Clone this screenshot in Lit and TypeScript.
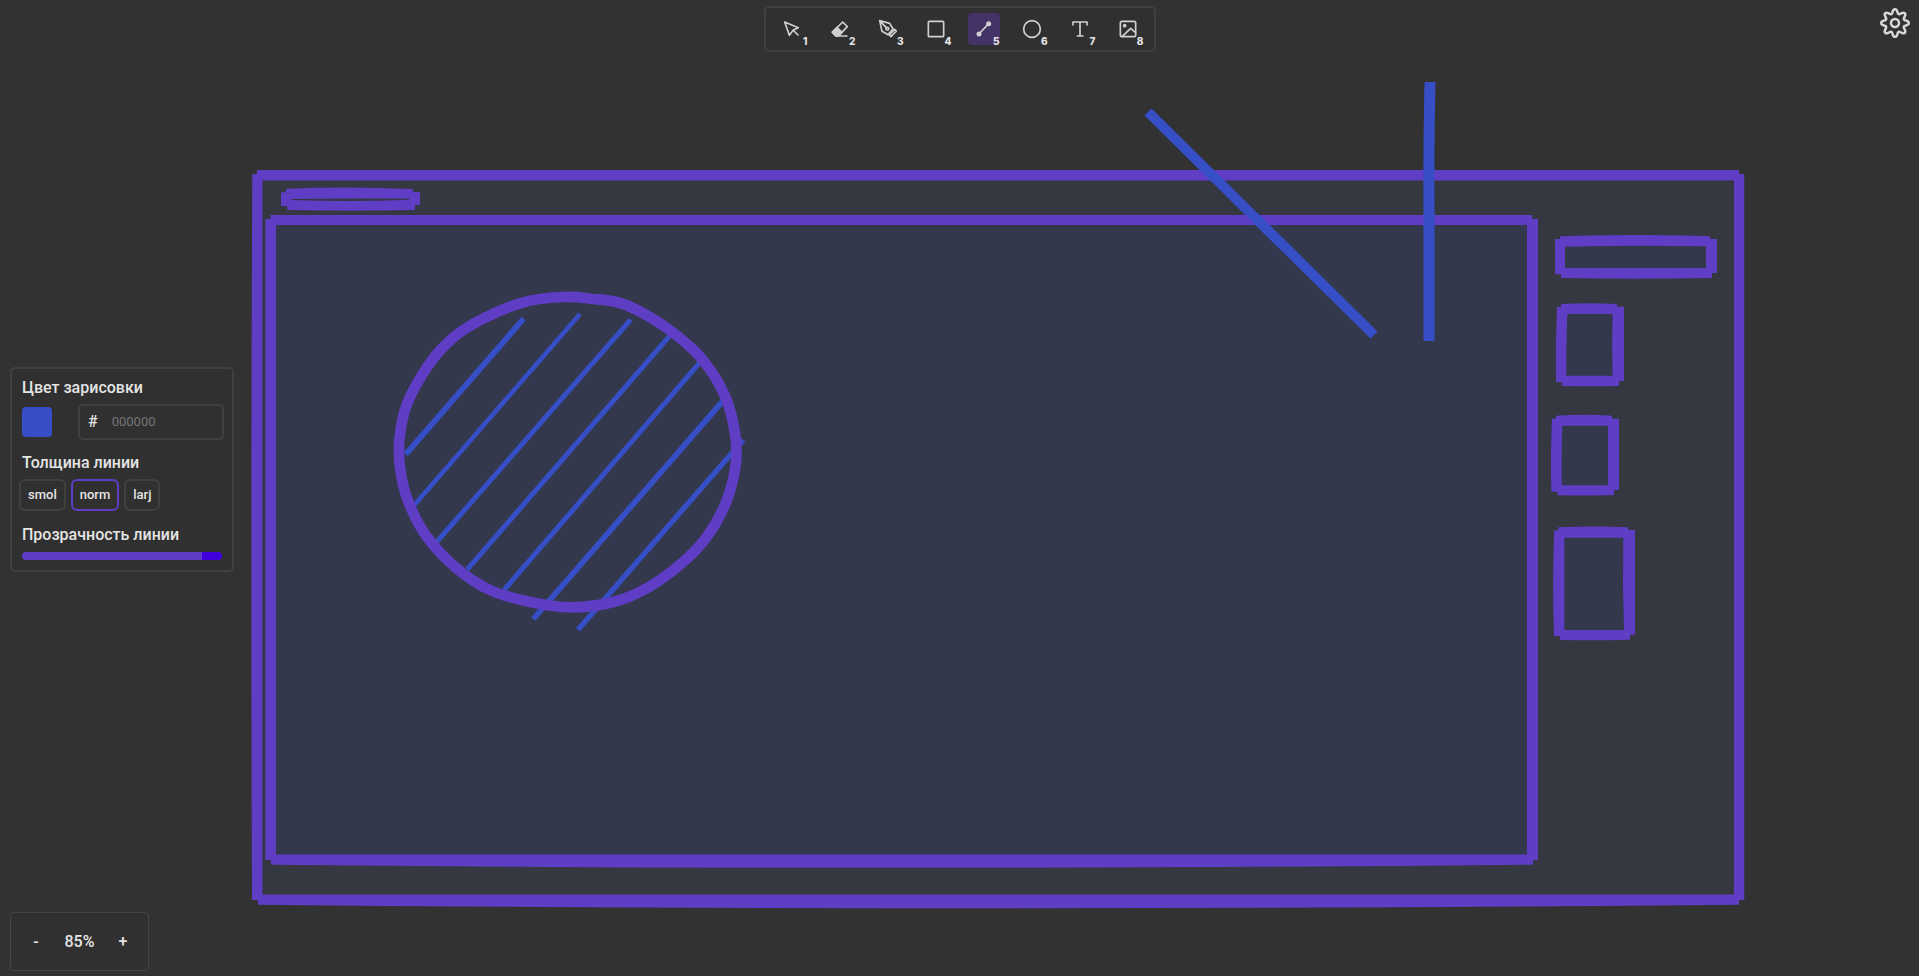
import { LitElement, html, svg, css } from "lit";
import { customElement, state } from "lit/decorators.js";

const tools = [
  { name: "Выделение", icon: svg`<path d="M26 27 67 44 52 51 40 67Z M54 54 66 66"/>` },
  { name: "Ластик", icon: svg`<path d="M56 27 70 41 44 68H35L25 58Z"/><path class="solid" d="M39 43 54 58 44 68H35L25 57Z"/><path d="M36 69H69"/>` },
  { name: "Перо", icon: svg`<path d="M23 23 30 55 48 65 63 48 53 31Z M23 23 42 43"/><circle cx="46" cy="47" r="4"/><path d="M52 66 57 71 73 54 68 49Z"/>` },
  { name: "Прямоугольник", icon: svg`<rect x="25" y="25" width="46" height="46" rx="3"/>` },
  { name: "Линия", icon: svg`<path d="M33 63 62 32"/><circle class="solid" cx="33" cy="63" r="5"/><circle class="solid" cx="62" cy="32" r="5"/>` },
  { name: "Эллипс", icon: svg`<circle cx="48" cy="48" r="25"/>` },
  { name: "Текст", icon: svg`<path d="M27 36V27H69V36 M48 27V69 M40 69H57"/>` },
  { name: "Изображение", icon: svg`<rect x="25" y="25" width="46" height="46" rx="5"/><circle class="solid" cx="38" cy="38" r="3"/><path d="M31 70 56 46 70 58"/>` },
];

const hatching = [
  [77, 553, 431, 146, 17],
  [105, 703, 600, 132, 14],
  [170, 816, 752, 149, 15],
  [262, 898, 880, 185, 15],
  [372, 960, 970, 265, 15],
  [460, 1047, 1040, 380, 17],
  [594, 1079, 1090, 510, 16],
];

const ring: [number, number][] = [
  [550, 81], [640, 87], [710, 96], [770, 119], [870, 181], [965, 266], [1035, 378], [1065, 490],
  [1067, 585], [1037, 700], [980, 801], [905, 880], [805, 952], [700, 996], [575, 1012], [450, 996],
  [330, 960], [230, 895], [140, 800], [85, 695], [61, 600], [58, 510], [80, 405], [145, 286],
  [215, 207], [300, 151], [430, 97],
];

/** Closed smooth curve through all the points (Catmull-Rom). */
function smooth(p: [number, number][]) {
  const n = p.length;
  let d = `M${p[0][0]} ${p[0][1]}`;
  for (let i = 0; i < n; i++) {
    const [a, b, c, e] = [p[(i + n - 1) % n], p[i], p[(i + 1) % n], p[(i + 2) % n]];
    d += `C${b[0] + (c[0] - a[0]) / 6} ${b[1] + (c[1] - a[1]) / 6} ${c[0] - (e[0] - b[0]) / 6} ${c[1] - (e[1] - b[1]) / 6} ${c[0]} ${c[1]}`;
  }
  return d + "Z";
}

/** Outline of the cog with rounded teeth. */
function cog() {
  const pts: [number, number][] = [];
  for (let i = 0; i < 64; i++) {
    const t = (i / 64) * Math.PI * 2;
    const w = Math.cos(8 * t);
    const r = 11.7 + 2.1 * Math.sign(w) * Math.pow(Math.abs(w), 0.7);
    pts.push([16 + r * Math.cos(t), 16 + r * Math.sin(t)]);
  }
  return smooth(pts);
}

@customElement("app-root")
export class AppRoot extends LitElement {
  @state() tool = 4;
  @state() width = "norm";
  @state() zoom = 85;

  static styles = css`
    :host {
      display: flex;
      flex-direction: column;
      position: relative;
      box-sizing: border-box;
      min-height: 100vh;
      padding: 6px 8px 5px;
      overflow: hidden;
      background: #323232;
      color: #e4e4e4;
      font: 500 16px/20px Roboto, sans-serif;
    }
    * { box-sizing: border-box; }
    button, input { font: inherit; color: inherit; margin: 0; }
    button { background: none; border: 0; padding: 0; cursor: pointer; }
    .canvas {
      position: absolute;
      inset: 0;
      width: 100%;
      height: 100%;
    }
    .violet { fill: #5f3dc4; }
    .ring { fill: none; stroke: #5f3dc4; stroke-width: 32; }
    .blue { fill: none; stroke: #364fc7; }
    .outer-fill { fill: #353741; }
    .inner-fill { fill: #33384d; }
    .top, .middle, .zoom { position: relative; }
    .top {
      display: grid;
      grid-template-columns: 1fr auto 1fr;
      align-items: start;
    }
    .tools {
      grid-column: 2;
      display: flex;
      gap: 16px;
      padding: 5px 10px;
      border: 2px solid #404040;
      border-radius: 5px;
      background: #303030;
    }
    .tool {
      position: relative;
      width: 32px;
      height: 32px;
      border-radius: 4px;
    }
    .tool.active { background: #443366; }
    .tool svg {
      display: block;
      width: 32px;
      height: 32px;
      fill: none;
      stroke: #d0d0d0;
      stroke-width: 5;
      stroke-linejoin: round;
      stroke-linecap: round;
    }
    .tool .solid { fill: #d0d0d0; }
    .key {
      position: absolute;
      right: 0;
      bottom: 0;
      font: 800 10px/8px Inter, sans-serif;
    }
    .settings { justify-self: end; width: 32px; height: 34px; }
    .settings svg {
      display: block;
      fill: none;
      stroke: #d8d8d8;
      stroke-width: 2.5;
    }
    .middle {
      flex: 1;
      display: flex;
      align-items: center;
      padding: 0 0 25px 2px;
    }
    .panel {
      width: 224px;
      padding: 9px 10px 10px;
      border: 2px solid #404040;
      border-radius: 5px;
      background: #303030;
    }
    .label { display: block; }
    .row { display: flex; align-items: center; }
    .colors { justify-content: space-between; margin: 6px -2px 13px 0; }
    .swatch {
      width: 30px;
      height: 30px;
      border-radius: 4px;
      background: #364fc7;
    }
    .hex {
      display: flex;
      align-items: center;
      gap: 14px;
      width: 146px;
      height: 36px;
      padding: 0 8px;
      border: 2px solid #404040;
      border-radius: 5px;
    }
    .hex input {
      width: 100px;
      padding: 0;
      border: 0;
      outline: 0;
      background: none;
      font-size: 13px;
      font-weight: 400;
    }
    .hex input::placeholder { color: #757575; opacity: 1; }
    .widths { gap: 5px; margin: 6px -3px 14px; }
    .widths button {
      height: 32px;
      padding: 0 7px;
      border: 2px solid #404040;
      border-radius: 6px;
      font-size: 13px;
    }
    .widths .active { border-color: #5f3dc4; }
    .slider {
      appearance: none;
      display: block;
      width: 100%;
      height: 8px;
      margin: 7px 0 0;
      border-radius: 4px;
      overflow: hidden;
      background: #5f3dc4;
    }
    .slider::-webkit-slider-thumb {
      appearance: none;
      width: 20px;
      height: 8px;
      background: #4000dc;
    }
    .zoom {
      align-self: flex-start;
      display: flex;
      align-items: center;
      gap: 11px;
      height: 59px;
      margin-left: 2px;
      padding: 0 9px;
      border: 1px solid #454545;
      border-radius: 4px;
      background: #303030;
    }
    .zoom button { width: 32px; height: 32px; }
    .zoom output { width: 33px; text-align: center; }
  `;

  drawing() {
    return html`<svg class="canvas" role="img" aria-label="Рисунок">
      <rect class="outer-fill" x="257" y="175" width="1482" height="725" />
      <rect class="inner-fill" x="271" y="220" width="1262" height="640" />
      <g class="violet" fill-rule="evenodd">
        <path d="M257 170H1739V174H1744.3V900H1739V904.7Q1000 912 258 904.7V900H252Q250.5 530 252.3 174H257ZM262.5 180.5V894.5H1734V180.5Z" />
        <path d="M270.5 215H1532V219H1538V860H1533V864.7Q900 871 271 864.7V860H265.3V219H270.5ZM276 225V854.5H1527V225Z" />
        <g transform="translate(240 160) scale(.33333)">
          <path d="M138 86Q330 78 519 87V96H540V135H525V150Q340 154 142 150V138H123V97H138ZM155 117V120Q340 126 507 119V116Q330 114 155 117Z" />
        </g>
        <g transform="translate(1500 160) scale(.33333)">
          <path class="inner-fill" d="M180 245H635V340H180Z M185 447H354V663H185Z M171 782H340V991H171Z M178 1118H388V1425H178Z" />
          <path d="M180 229Q420 221 630 229V237H651V339H636V354Q400 358 183 354V343H165V237H180ZM195 260V324H618V259Q400 255 195 260Z" />
          <path d="M183 432Q270 427 351 432V440H372V663H357V678Q270 680 186 678V666H168Q166 550 171 441H183ZM202 462Q198 560 199 647H338Q335 560 338 462Z" />
          <path d="M168 767Q260 762 336 767V776H357V990H342V1005Q260 1008 172 1006V995H154Q151 880 156 776H168ZM187 797Q184 880 185 976H324V797Z" />
          <path d="M175 1102Q290 1097 384 1102V1110H405V1424H390V1439Q290 1442 180 1440V1428H162Q156 1260 163 1111H175ZM193 1133V1410H372Q367 1270 370 1133Z" />
        </g>
      </g>
      <g transform="translate(380 270) scale(.33333)">
        ${hatching.map(([x1, y1, x2, y2, w]) => svg`<line class="blue" x1=${x1} y1=${y1} x2=${x2} y2=${y2} stroke-width=${w} />`)}
        <path class="ring" d=${smooth(ring)} />
      </g>
      <path class="blue" stroke-width="10" d="M1148 112 1374 335" />
      <path class="blue" stroke-width="11" d="M1430 82Q1428.5 150 1429 210V341" />
    </svg>`;
  }

  render() {
    return html`
      ${this.drawing()}
      <header class="top">
        <nav class="tools" aria-label="Инструменты">
          ${tools.map(
            (t, i) => html`<button
              class="tool ${i === this.tool ? "active" : ""}"
              aria-label=${t.name}
              @click=${() => (this.tool = i)}
            ><svg viewBox="0 0 96 96">${t.icon}</svg><span class="key">${i + 1}</span></button>`
          )}
        </nav>
        <button class="settings" aria-label="Настройки">
          <svg width="32" height="32" viewBox="0 0 32 32"><path d=${cog()} /><circle cx="16" cy="16" r="4" /></svg>
        </button>
      </header>
      <main class="middle">
        <section class="panel">
          <label class="label" for="hex">Цвет зарисовки</label>
          <div class="row colors">
            <button class="swatch" aria-label="Выбрать цвет"></button>
            <div class="hex"><span>#</span><input id="hex" placeholder="000000" maxlength="6" /></div>
          </div>
          <span class="label" id="widths">Толщина линии</span>
          <div class="row widths" role="group" aria-labelledby="widths">
            ${["smol", "norm", "larj"].map(
              (w) => html`<button class=${w === this.width ? "active" : ""} @click=${() => (this.width = w)}>${w}</button>`
            )}
          </div>
          <label class="label" for="opacity">Прозрачность линии</label>
          <input class="slider" id="opacity" type="range" min="0" max="100" value="100" />
        </section>
      </main>
      <footer class="zoom">
        <button aria-label="Уменьшить" @click=${() => (this.zoom -= 5)}>-</button>
        <output>${this.zoom}%</output>
        <button aria-label="Увеличить" @click=${() => (this.zoom += 5)}>+</button>
      </footer>
    `;
  }
}
